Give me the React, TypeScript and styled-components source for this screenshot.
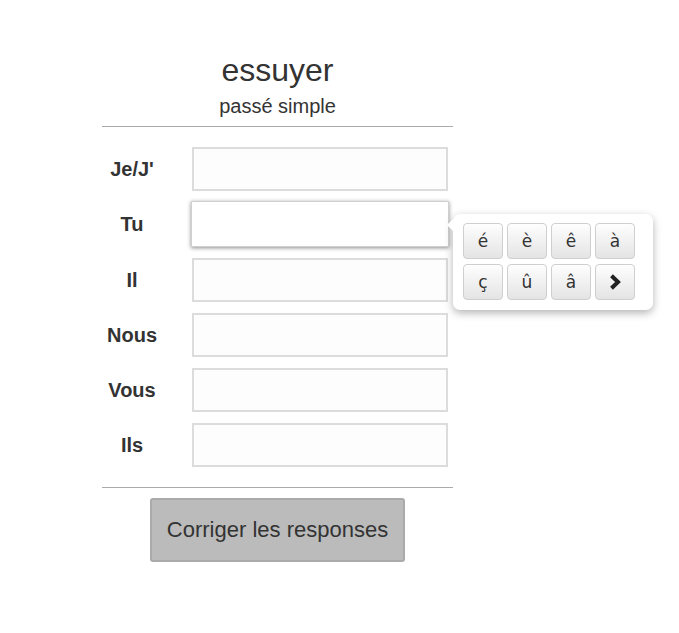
import React from "react";
import styled, { createGlobalStyle } from "styled-components";

const Global = createGlobalStyle`
  html, body { margin: 0; padding: 0; background: #fff; }
  body { font-family: "Liberation Sans", Arial, sans-serif; color: #333; }
`;

const Page = styled.div`
  width: 679px;
  height: 633px;
  position: relative;
`;

const Card = styled.div`
  width: 351px;
  margin-left: 102px;
  padding-top: 51px;
  display: flex;
  flex-direction: column;
  align-items: center;
`;

const Title = styled.h1`
  margin: 0;
  font-size: 32px;
  line-height: 38px;
  font-weight: normal;
  color: #333;
`;

const Subtitle = styled.div`
  font-size: 20px;
  line-height: 24px;
  margin-top: 5px;
`;

const Rule = styled.hr<{ $gap?: number }>`
  width: 100%;
  border: none;
  border-top: 1px solid #aaa;
  margin: ${(p) => p.$gap ?? 0}px 0 0;
  height: 0;
`;

const Rows = styled.div`
  width: 100%;
  display: flex;
  flex-direction: column;
  gap: 11px;
  padding: 20px 0 20px;
`;

const Row = styled.div`
  display: grid;
  grid-template-columns: 60px 256px;
  column-gap: 30px;
  align-items: center;
  position: relative;
`;

const Label = styled.label`
  text-align: center;
  font-weight: bold;
  font-size: 20px;
`;

const Field = styled.input<{ $focused?: boolean }>`
  box-sizing: border-box;
  width: 256px;
  height: 44px;
  border: 2px solid #dcdcdc;
  background: #fdfdfd;
  outline: none;
  font-size: 20px;
  font-family: inherit;
  ${(p) =>
    p.$focused &&
    `
    width: 258px;
    height: 46px;
    margin: -1px 0 0 -1px;
    border: 1px solid #d0d0d0;
    background: #fff;
    box-shadow: 0 1px 4px rgba(0,0,0,0.45);
  `}
`;

const Submit = styled.button`
  margin-top: 10px;
  width: 255px;
  height: 64px;
  background: #bbb;
  border: 2px solid #aaa;
  border-radius: 3px;
  font-family: "Liberation Sans", Arial, sans-serif;
  font-size: 22px;
  color: #333;
`;

const Popover = styled.div`
  position: absolute;
  left: 453px;
  top: 214px;
  width: 200px;
  height: 96px;
  box-sizing: border-box;
  padding: 9px 0 0 10px;
  background: #fff;
  border-radius: 7px;
  box-shadow: 0 3px 8px rgba(0, 0, 0, 0.3);
  &::before {
    content: "";
    position: absolute;
    left: -6px;
    top: 5px;
    border-style: solid;
    border-width: 6px 6px 6px 0;
    border-color: transparent #fff transparent transparent;
  }
`;

const KeyGrid = styled.div`
  display: grid;
  grid-template-columns: repeat(4, 40px);
  grid-auto-rows: 36px;
  gap: 5px 4px;
  position: relative;
`;

const Key = styled.button`
  box-sizing: border-box;
  border: 1px solid #cfcfcf;
  border-radius: 4px;
  background: linear-gradient(#fefefe, #e4e4e4);
  font-family: "DejaVu Sans", "Liberation Sans", sans-serif;
  font-size: 17px;
  color: #333;
  padding: 0;
  display: flex;
  align-items: center;
  justify-content: center;
`;

const Chevron = () => (
  <svg width="12" height="16" viewBox="0 0 12 16">
    <path d="M2.5 1.8 L9 8 L2.5 14.2" fill="none" stroke="#222" strokeWidth="4" strokeLinejoin="miter" />
  </svg>
);

const persons = ["Je/J'", "Tu", "Il", "Nous", "Vous", "Ils"];
const keys = ["é", "è", "ê", "à", "ç", "û", "â"];

export default function App() {
  return (
    <Page>
      <Global />
      <Card>
        <Title>essuyer</Title>
        <Subtitle>passé simple</Subtitle>
        <Rule $gap={8} />
        <Rows>
          {persons.map((p, i) => (
            <Row key={p}>
              <Label>{p}</Label>
              <Field $focused={i === 1} />
            </Row>
          ))}
        </Rows>
        <Rule />
        <Submit>Corriger les responses</Submit>
      </Card>
      <Popover>
        <KeyGrid>
          {keys.map((k) => (
            <Key key={k}>{k}</Key>
          ))}
          <Key>
            <Chevron />
          </Key>
        </KeyGrid>
      </Popover>
    </Page>
  );
}
